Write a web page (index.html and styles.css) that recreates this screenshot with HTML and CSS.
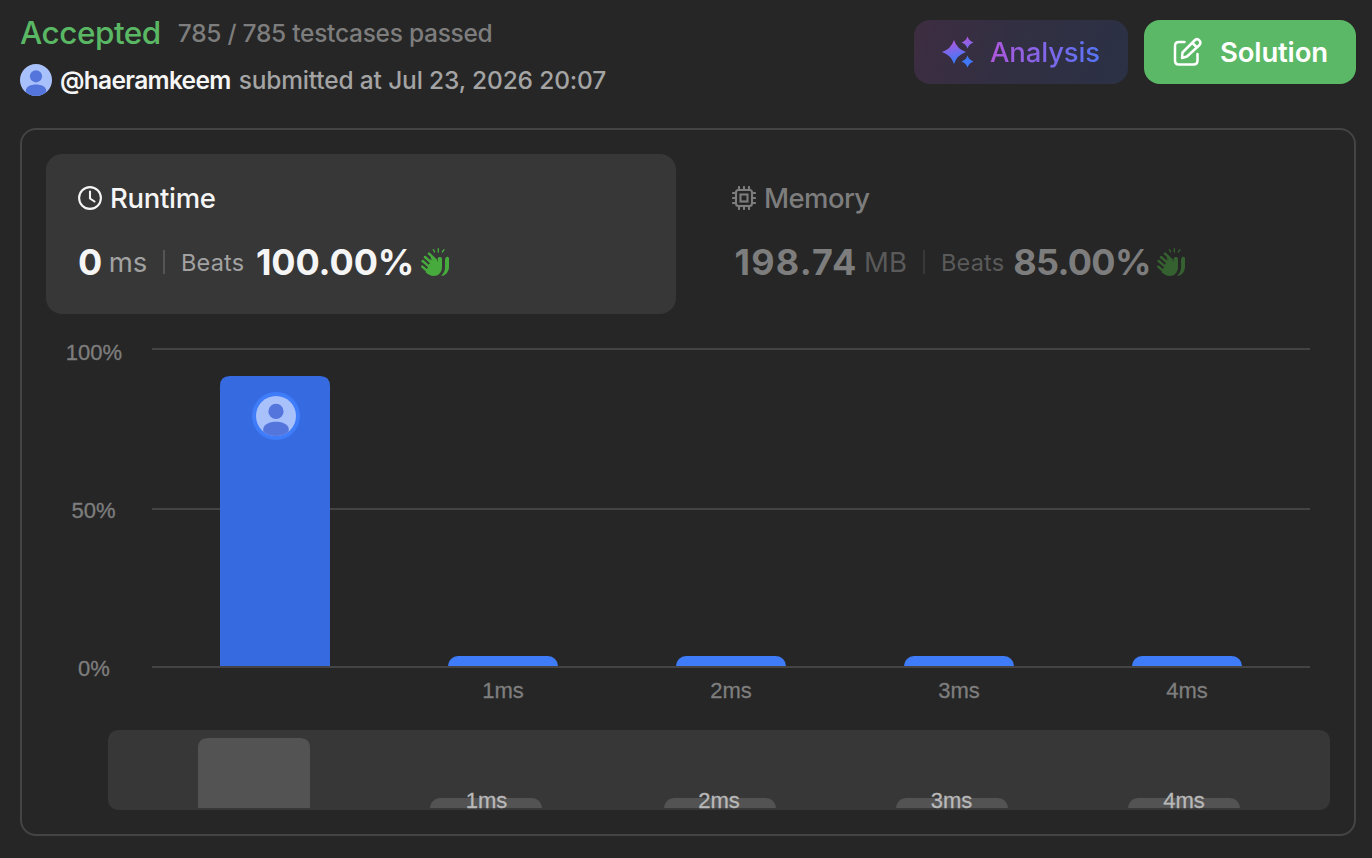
FILE: index.html
```html
<!DOCTYPE html>
<html lang="en">
<head>
<meta charset="utf-8">
<title>Submission</title>
<link rel="stylesheet" href="styles.css">
</head>
<body>
<svg class="defs" width="0" height="0" aria-hidden="true">
  <defs>
    <linearGradient id="spark" gradientUnits="userSpaceOnUse" x1="12" y1="2" x2="19" y2="30"><stop offset="0.1" stop-color="#b457dc"/><stop offset="0.85" stop-color="#3f79fa"/></linearGradient>
    <clipPath id="round"><circle cx="16" cy="16" r="16"/></clipPath>
    <symbol id="avatar" viewBox="0 0 32 32">
      <g clip-path="url(#round)"><rect width="32" height="32" fill="#a9c1fb"/><circle cx="16" cy="12.3" r="6.1" fill="#5475dc"/><path d="M5.8 34V26.5C5.8 18.5 26.2 18.5 26.2 26.5V34Z" fill="#5475dc"/></g>
    </symbol>
    <symbol id="clap" viewBox="0 0 84 84">
      <path d="M24 17L45 37M12 27L36 49M5 39L30 61M4 56L22 72" stroke="currentColor" stroke-width="7.5" stroke-linecap="round"/>
      <path d="M30 25L50 41V33C50 25 63 25 63 33V57C63 74 52 84 38 84C28 84 21 79 14 73L28 38Z" fill="currentColor"/>
      <path d="M74 29C76 25 84 25 84 32V56C84 71 74 83 60 84C68 77 72 69 72 58V35Z" fill="currentColor"/>
      <path d="M37 5L41 12M52 2V12M69 5L64 12" stroke="currentColor" stroke-width="4" stroke-linecap="round"/>
      <path d="M21 24L33 35M13 36L26 47M7 48L19 58" stroke="var(--gap)" stroke-width="2" stroke-linecap="round"/>
    </symbol>
  </defs>
</svg>
<main class="page">
  <header class="header">
    <div class="summary">
      <div class="status-row"><span class="status">Accepted</span><span class="cases">785 / 785 testcases passed</span></div>
      <div class="author-row">
        <svg class="avatar" width="32" height="32"><use href="#avatar"/></svg>
        <span class="author">@haeramkeem</span><span class="when">submitted at Jul 23, 2026 20:07</span>
      </div>
    </div>
    <div class="actions">
      <button class="btn btn-analysis">
        <svg width="34" height="34" viewBox="0 0 34 34" fill="url(#spark)"><path d="M14 5Q17 14 26 17Q17 20 14 29Q11 20 2 17Q11 14 14 5Z"/><path d="M27.5 1.5Q29 6 33.5 7.5Q29 9 27.5 13.5Q26 9 21.5 7.5Q26 6 27.5 1.5Z"/><path d="M27.5 20.5Q29 25 33.5 26.5Q29 28 27.5 32.5Q26 28 21.5 26.5Q26 25 27.5 20.5Z"/></svg>
        <span class="btn-text gradient">Analysis</span>
      </button>
      <button class="btn btn-solution">
        <svg width="32" height="32" viewBox="0 0 32 32" fill="none" stroke="#fff" stroke-width="2.5" stroke-linecap="round" stroke-linejoin="round"><path d="M14.5 6H9Q5 6 5 10V24.500Q5 28.500 9 28.500H23.500Q27.500 28.500 27.500 24.500V18"/><path d="M12.500 16.500L25 4C28 1.500 32 6 29.500 9L17 20.500L12 22Z"/><path d="M22.500 7L26.500 11"/></svg>
        <span class="btn-text solution">Solution</span>
      </button>
    </div>
  </header>
  <section class="card">
    <div class="metrics">
      <div class="metric active">
        <div class="metric-title">
          <svg width="24" height="24" viewBox="0 0 24 24" fill="none" stroke="currentColor" stroke-width="2.1" stroke-linecap="round" stroke-linejoin="round"><circle cx="12" cy="12" r="10.9"/><path d="M12 5.5V12.5L16.5 15.5"/></svg>
          <span class="name-r">Runtime</span>
        </div>
        <div class="metric-value"><b class="num n0">0</b><span class="unit ms">ms</span><i class="rule"></i><span class="beats">Beats</span><b class="num n100">100.00%</b><svg class="clap" width="28" height="28"><use href="#clap"/></svg></div>
      </div>
      <div class="metric muted">
        <div class="metric-title">
          <svg width="24" height="24" viewBox="0 0 24 24" fill="none" stroke="currentColor" stroke-width="2.1" stroke-linecap="round"><rect x="4" y="4" width="16" height="16" rx="2.5"/><rect x="8.5" y="8.5" width="7" height="7"/><path d="M7 1V3M12 1V3M17 1V3M7 21V23M12 21V23M17 21V23M1 7H3M1 12H3M1 17H3M21 7H23M21 12H23M21 17H23"/></svg>
          <span class="name-m">Memory</span>
        </div>
        <div class="metric-value"><b class="num n198">198.74</b><span class="unit mb">MB</span><i class="rule"></i><span class="beats">Beats</span><b class="num n85">85.00%</b><svg class="clap" width="28" height="28"><use href="#clap"/></svg></div>
      </div>
    </div>
    <svg class="chart" width="1284" height="496" viewBox="46 314 1284 496">
      <path class="grid" d="M152 349H1310M152 509H1310M152 667H1310"/>
      <g class="axis"><text x="94" y="360">100%</text><text x="93.5" y="518">50%</text><text x="94" y="676">0%</text></g>
      <path d="M220 666V386Q220 376 230 376H320Q330 376 330 386V666Z" fill="#366ae0"/>
      <circle cx="276" cy="416" r="24" fill="#3f7cf9"/>
      <use href="#avatar" x="256" y="396" width="40" height="40"/>
      <g fill="#3f7cf9"><path d="M448 666A10 10 0 0 1 458 656H548A10 10 0 0 1 558 666Z"/><path d="M676 666A10 10 0 0 1 686 656H776A10 10 0 0 1 786 666Z"/><path d="M904 666A10 10 0 0 1 914 656H1004A10 10 0 0 1 1014 666Z"/><path d="M1132 666A10 10 0 0 1 1142 656H1232A10 10 0 0 1 1242 666Z"/></g>
      <g class="axis"><text x="503" y="698">1ms</text><text x="731" y="698">2ms</text><text x="959" y="698">3ms</text><text x="1187" y="698">4ms</text></g>
      <rect x="108" y="730" width="1222" height="80" rx="10" fill="#373737"/>
      <g fill="#535353"><path d="M198 808V748Q198 738 208 738H300Q310 738 310 748V808Z"/><path d="M430 808A10 10 0 0 1 440 798H532A10 10 0 0 1 542 808Z"/><path d="M664 808A10 10 0 0 1 674 798H766A10 10 0 0 1 776 808Z"/><path d="M896 808A10 10 0 0 1 906 798H998A10 10 0 0 1 1008 808Z"/><path d="M1128 808A10 10 0 0 1 1138 798H1230A10 10 0 0 1 1240 808Z"/></g>
      <g class="axis overview"><text x="486.5" y="808">1ms</text><text x="719" y="808">2ms</text><text x="951.5" y="808">3ms</text><text x="1184" y="808">4ms</text></g>
    </svg>
  </section>
</main>
</body>
</html>
```
FILE: styles.css
```css
* { box-sizing: border-box; }
body { margin: 0; background: #262626; font-family: Inter, sans-serif; color: #f5f5f5; }
.defs { position: absolute; }
.page { width: 1372px; height: 858px; overflow: hidden; padding: 0 16px 0 20px; }
.header { display: flex; justify-content: space-between; height: 128px; }
.summary span { white-space: nowrap; }
.status-row { display: flex; align-items: center; height: 64px; line-height: 64px; padding-top: 1px; }
.status { font-size: 31.5px; font-weight: 550; letter-spacing: -0.5px; color: #5ab865; }
.cases { margin-left: 17px; font-size: 24.5px; font-weight: 500; letter-spacing: -0.27px; color: #7d7d7d; }
.author-row { display: flex; align-items: center; height: 32px; line-height: 32px; font-size: 24.5px; }
.avatar { margin-right: 8px; }
.author { font-weight: 600; letter-spacing: -0.68px; }
.when { margin-left: 8px; font-weight: 500; letter-spacing: -0.16px; color: #a4a4a4; }
.actions { display: flex; gap: 16px; padding-top: 20px; }
.btn { display: flex; align-items: center; height: 64px; border: 0; border-radius: 16px; font-family: inherit; font-size: 27.5px; line-height: 32px; letter-spacing: -0.15px; }
.btn-analysis { width: 214px; padding: 0 0 0 26px; gap: 16px; background: linear-gradient(110deg, #3e2d41, #322f42 45%, #2b3145); }
.btn-solution { width: 212px; padding: 0 0 0 26px; gap: 18px; background: #5ab866; color: #fff; }
.gradient { font-weight: 500; color: transparent; background: linear-gradient(90deg, #af57dc, #5475f5); background-clip: text; }
.solution { font-weight: 600; }
.card { height: 708px; border: 2px solid #444; border-radius: 16px; padding: 24px; }
.metrics { display: flex; gap: 24px; }
.metric { width: 630px; height: 160px; padding: 28px 32px; border-radius: 16px; --gap: #262626; }
.active { background: #373737; --gap: #373737; }
.metric-title { display: flex; align-items: center; gap: 8px; height: 32px; font-size: 27.5px; font-weight: 500; line-height: 32px; letter-spacing: -0.3px; }
.name-m { letter-spacing: -0.6px; }
.metric-value { display: flex; align-items: center; height: 48px; margin-top: 24px; line-height: 48px; }
.num { font-size: 36px; font-weight: 700; }
.unit { font-size: 27.5px; color: #a2a2a2; }
.ms { margin-left: 6.5px; letter-spacing: -0.2px; }
.mb { margin-left: 6.5px; }
.rule { width: 2px; height: 24px; background: #555; margin: 0 16px; }
.beats { width: 62.4px; padding-top: 2px; font-size: 23.5px; letter-spacing: 0.2px; color: #a2a2a2; }
.n100 { margin-left: 12.5px; letter-spacing: -0.1px; }
.n198 { margin-left: 2.5px; letter-spacing: 1.2px; }
.n85 { margin-left: 10px; letter-spacing: -0.7px; }
.clap { color: #47aa3d; margin-left: 6.5px; }
.muted { color: #7d7d7d; }
.muted .unit, .muted .beats { color: #5a5a5a; }
.muted .rule { background: #383838; }
.muted .clap { color: #356030; }
.chart { display: block; overflow: visible; }
.grid { stroke: #444; stroke-width: 2; }
.axis { font: 22px "Liberation Sans", Arial, sans-serif; fill: #7e7e7e; stroke: #7e7e7e; stroke-width: 0.3; text-anchor: middle; }
.overview { fill: #b9b9b9; stroke: #b9b9b9; }
```
